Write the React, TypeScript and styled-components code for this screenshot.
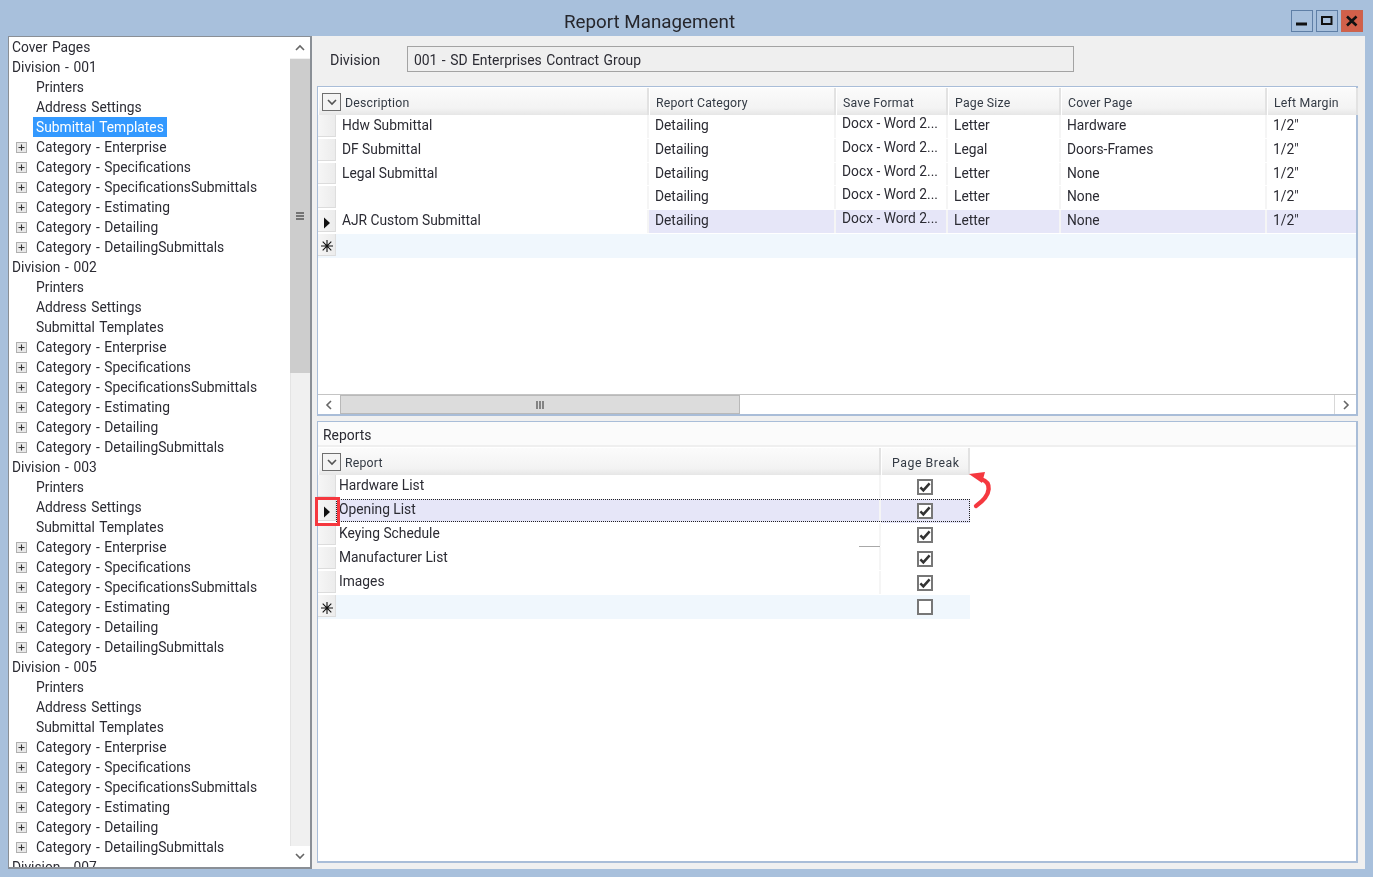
import React from "react";
import styled, { createGlobalStyle } from "styled-components";

const Global = createGlobalStyle`
  html, body { margin: 0; padding: 0; height: 100%; overflow: hidden; }
  body { background: #a8c0dc; font-family: Roboto, "Liberation Sans", sans-serif; color: #2b2b33; }
  * { box-sizing: border-box; }
`;

const Windowed = styled.div`
  position: relative;
  width: 1373px;
  height: 877px;
  overflow: hidden;
  background: #a8c0dc;
  display: flex;
  flex-direction: column;
  filter: blur(0.3px);
`;
const TitleBar = styled.div`
  height: 36px;
  flex: none;
  display: flex;
  align-items: flex-start;
  padding: 10px 10px 0 0;
`;
const Title = styled.div`
  flex: 1;
  text-align: center;
  padding-left: 8px;
  margin-top: 2px;
  font-size: 18.8px;
  line-height: 20px;
  color: #26262c;
`;
const Controls = styled.div`
  display: flex;
  gap: 3px;
`;
const WinBtn = styled.div<{ $close?: boolean }>`
  width: 22px;
  height: 22px;
  border: 1px solid ${(p) => (p.$close ? "#c9644e" : "#5f7fa6")};
  background: ${(p) => (p.$close ? "#d2604a" : "#a8c0dc")};
  display: flex;
  align-items: center;
  justify-content: center;
`;
const Body = styled.div`
  flex: 1;
  display: flex;
  padding: 0 8px 8px 8px;
  min-height: 0;
`;
const TreePane = styled.div`
  width: 304px;
  flex: none;
  height: 833px;
  border: 1px solid #8a8f96;
  border-right-width: 2px;
  border-bottom-width: 2px;
  background: #fff;
  display: flex;
`;
const TreeList = styled.div`
  flex: 1;
  overflow: hidden;
  min-width: 0;
`;
const TreeRow = styled.div<{ $level: number }>`
  height: 20px;
  display: flex;
  align-items: center;
  padding-left: ${(p) => (p.$level === 0 ? 3 : 8)}px;
  font-size: 13.8px;
  word-spacing: 1.2px;
  white-space: nowrap;
`;
const Expander = styled.span<{ $hidden?: boolean }>`
  width: 11px;
  height: 11px;
  flex: none;
  margin-right: 9px;
  margin-left: -1px;
  visibility: ${(p) => (p.$hidden ? "hidden" : "visible")};
  display: flex;
`;
const TreeLabel = styled.span<{ $selected?: boolean }>`
  padding: 0 3px;
  height: 20px;
  line-height: 20px;
  margin-left: -3px;
  background: ${(p) => (p.$selected ? "#3399ff" : "transparent")};
  color: ${(p) => (p.$selected ? "#fff" : "inherit")};
`;
const VScroll = styled.div`
  width: 20px;
  flex: none;
  margin-top: 1px;
  margin-bottom: 1px;
  background: #f0f0f0;
  display: flex;
  flex-direction: column;
`;
const ScrollBtn = styled.div`
  height: 20px;
  flex: none;
  background: #fff;
  display: flex;
  align-items: center;
  justify-content: center;
`;
const VThumb = styled.div`
  height: 314px;
  flex: none;
  margin-top: 1px;
  background: #cdcdcd;
  display: flex;
  align-items: center;
  justify-content: center;
`;
const VTrack = styled.div`
  flex: 1;
  border-left: 1px solid #e4e4e4;
`;
const MainPane = styled.div`
  flex: 1;
  min-width: 0;
  background: #f0f0f0;
  padding: 10px 7px 6px 5px;
  display: flex;
  flex-direction: column;
`;
const DivisionRow = styled.div`
  height: 26px;
  flex: none;
  display: flex;
  align-items: center;
  margin-bottom: 14px;
  padding-left: 13px;
`;
const FieldLabel = styled.div`
  width: 77px;
  flex: none;
  font-size: 14.3px;
  margin-top: 2px;
`;
const FieldValue = styled.div`
  width: 667px;
  height: 26px;
  border: 1px solid #a3a3a3;
  background: #efefef;
  padding: 0 6px;
  font-size: 13.9px;
  word-spacing: 1px;
  line-height: 26px;
`;
const GridFrame = styled.div`
  height: 330px;
  flex: none;
  border: 2px solid #a9bdd8;
  border-width: 1px 2px 2px 1px;
  background: #fff;
  display: flex;
  flex-direction: column;
  margin-bottom: 5px;
`;
const GridBody = styled.div`
  flex: 1;
  min-height: 0;
  overflow: hidden;
`;
const HeaderRow = styled.div`
  display: flex;
  height: 27px;
  margin-top: 1px;
  background: #fff;
`;
const HeaderCell = styled.div<{ $w: number; $first?: boolean; $wide?: boolean }>`
  width: ${(p) => p.$w}px;
  flex: none;
  display: flex;
  align-items: center;
  padding-left: ${(p) => (p.$first ? 3 : p.$wide ? 10 : 6)}px;
  font-size: 12.3px;
  letter-spacing: ${(p) => (p.$wide ? 0.55 : 0.2)}px;
  color: #333a44;
  background: linear-gradient(#fbfbfb, #f3f3f3 75%, #e6e6e6);
  border-right: 2px solid #e2e2e2;
  border-left: 1px solid #fff;
`;
const HeaderText = styled.span`
  position: relative;
  top: 1px;
`;
const ChevronBox = styled.span`
  width: 19px;
  height: 18px;
  flex: none;
  border: 1.5px solid #6f6f6f;
  background: #f4f4f4;
  margin-right: 4px;
  display: flex;
  align-items: center;
  justify-content: center;
`;
const Row = styled.div<{ $isNew?: boolean; $h?: number }>`
  display: flex;
  height: ${(p) => p.$h ?? 24}px;
  position: relative;
  background: ${(p) => (p.$isNew ? "#f0f7fd" : "#fff")};
`;
const RowHead = styled.div`
  width: 18px;
  flex: none;
  margin-bottom: 2px;
  padding-top: 4px;
  background: linear-gradient(90deg, #f6f6f6, #ececec);
  border-bottom: 1px solid #dcdcdc;
  border-right: 1px solid #dedede;
  display: flex;
  align-items: center;
  justify-content: center;
`;
const Cell = styled.div<{ $w: number; $sel?: boolean; $raise?: boolean; $blank?: boolean; $pad?: number }>`
  width: ${(p) => p.$w}px;
  flex: none;
  padding-left: ${(p) => p.$pad ?? 6}px;
  font-size: 13.8px;
  line-height: ${(p) => (p.$raise ? 17 : 20)}px;
  white-space: nowrap;
  overflow: hidden;
  margin-bottom: 1px;
  border-right: 2px solid ${(p) => (p.$blank ? "transparent" : "#f5f5f5")};
  background: ${(p) => (p.$sel ? "#e6e6f8" : p.$blank ? "transparent" : "#fff")};
`;
const CheckCell = styled.div<{ $w: number; $sel?: boolean }>`
  width: ${(p) => p.$w}px;
  flex: none;
  display: flex;
  align-items: center;
  justify-content: center;
  padding-right: 1px;
  background: ${(p) => (p.$sel ? "#e6e6f8" : "transparent")};
`;
const FocusOutline = styled.div`
  position: absolute;
  left: 18px;
  right: 0;
  top: 0;
  bottom: 1px;
  border: 1px dotted #222;
  pointer-events: none;
`;
const Spacer = styled.div`
  flex: 1;
`;
const HScroll = styled.div`
  height: 20px;
  flex: none;
  display: flex;
  background: #fff;
  border-top: 1px solid #c4c4c4;
`;
const HBtn = styled.div<{ $end?: boolean }>`
  width: 22px;
  flex: none;
  background: #fff;
  display: flex;
  align-items: center;
  justify-content: center;
  ${(p) => (p.$end ? "border-left: 1px solid #d8d8d8;" : "")}
`;
const HThumb = styled.div`
  width: 400px;
  flex: none;
  background: #dcdcdc;
  border: 1px solid #b9b9b9;
  display: flex;
  align-items: center;
  justify-content: center;
`;
const ReportsFrame = styled.div`
  flex: 1;
  min-height: 0;
  border: 2px solid #a9bdd8;
  border-width: 1px 2px 2px 1px;
  background: #fff;
  display: flex;
  flex-direction: column;
`;
const ReportsCaption = styled.div`
  height: 25px;
  flex: none;
  background: #fbfbfb;
  border-bottom: 2px solid #efefef;
  padding-left: 5px;
  font-size: 13.9px;
  line-height: 26px;
`;
const ReportsTable = styled.div`
  width: 652px;
`;
const CheckBox = styled.span`
  width: 16px;
  height: 16px;
  border: 2px solid #777;
  background: #fff;
  display: flex;
  align-items: center;
  justify-content: center;
`;
const RedBox = styled.div`
  position: absolute;
  left: 315px;
  top: 497px;
  width: 25px;
  height: 29px;
  border: 3px solid #f5383f;
  pointer-events: none;
`;
const ArrowOverlay = styled.svg`
  position: absolute;
  left: 965px;
  top: 468px;
  width: 30px;
  height: 44px;
  pointer-events: none;
`;
const Smudge = styled.div`
  position: absolute;
  left: 859px;
  top: 546px;
  width: 21px;
  height: 1px;
  background: #a8a8a8;
`;

const Plus = () => (
  <svg width="11" height="11" viewBox="0 0 11 11">
    <rect x="0.5" y="0.5" width="10" height="10" fill="#e9e9e9" stroke="#b0b0b0" />
    <path d="M5.5 2.5v6M2.5 5.5h6" stroke="#333" strokeWidth="1.1" />
  </svg>
);
const Triangle = () => (
  <svg width="8" height="14" viewBox="0 0 8 14">
    <path d="M1 1.5 7 7 1 12.5Z" fill="#111" />
  </svg>
);
const Star = () => (
  <svg width="14" height="14" viewBox="0 0 14 14" style={{ flex: "none" }}>
    <path d="M7 1v12M1 7h12M2.7 2.7l8.6 8.6M11.3 2.7l-8.6 8.6" stroke="#111" strokeWidth="1.1" />
  </svg>
);
const Chevron = ({ d, c = "#666" }: { d: string; c?: string }) => (
  <svg width="12" height="12" viewBox="0 0 12 12">
    <path d={d} fill="none" stroke={c} strokeWidth="1.6" />
  </svg>
);
const Check = () => (
  <svg width="13" height="12" viewBox="0 0 13 12">
    <path d="M1.5 6.5 4.7 9.7 11.5 2" fill="none" stroke="#333" strokeWidth="2.7" />
  </svg>
);

type TreeItem = { label: string; level: number; plus?: boolean; selected?: boolean };
const categories = ["Enterprise", "Specifications", "SpecificationsSubmittals", "Estimating", "Detailing", "DetailingSubmittals"];
const treeItems: TreeItem[] = [{ label: "Cover Pages", level: 0 }];
["001", "002", "003", "005", "007"].forEach((d) => {
  treeItems.push({ label: `Division - ${d}`, level: 0 });
  treeItems.push({ label: "Printers", level: 1 });
  treeItems.push({ label: "Address Settings", level: 1 });
  treeItems.push({ label: "Submittal Templates", level: 1, selected: d === "001" });
  categories.forEach((c) => treeItems.push({ label: `Category - ${c}`, level: 1, plus: true }));
});

const columns = [
  { title: "Description", w: 331 },
  { title: "Report Category", w: 187 },
  { title: "Save Format", w: 112 },
  { title: "Page Size", w: 113 },
  { title: "Cover Page", w: 206 },
  { title: "Left Margin", w: 91 },
];
const templates = [
  ["Hdw Submittal", "Letter", "Hardware"],
  ["DF Submittal", "Legal", "Doors-Frames"],
  ["Legal Submittal", "Letter", "None"],
  ["", "Letter", "None"],
  ["AJR Custom Submittal", "Letter", "None"],
];
const reports = ["Hardware List", "Opening List", "Keying Schedule", "Manufacturer List", "Images"];

export default function App() {
  return (
    <Windowed>
      <Global />
      <TitleBar>
        <Title>Report Management</Title>
        <Controls>
          <WinBtn>
            <svg width="14" height="14" viewBox="0 0 14 14"><rect x="1" y="8.5" width="11" height="3" fill="#111" /></svg>
          </WinBtn>
          <WinBtn>
            <svg width="14" height="14" viewBox="0 0 14 14"><rect x="2" y="3" width="9.5" height="7" fill="none" stroke="#111" strokeWidth="2" /></svg>
          </WinBtn>
          <WinBtn $close>
            <svg width="14" height="14" viewBox="0 0 14 14"><path d="M2 2.5 11.5 11.5M11.5 2.5 2 11.5" stroke="#111" strokeWidth="2.6" /></svg>
          </WinBtn>
        </Controls>
      </TitleBar>
      <Body>
        <TreePane>
          <TreeList>
            {treeItems.map((t, i) => (
              <TreeRow key={i} $level={t.level}>
                {t.level === 1 && <Expander $hidden={!t.plus}><Plus /></Expander>}
                <TreeLabel $selected={t.selected}>{t.label}</TreeLabel>
              </TreeRow>
            ))}
          </TreeList>
          <VScroll>
            <ScrollBtn><Chevron d="M2 8l4-4 4 4" /></ScrollBtn>
            <VThumb>
              <svg width="10" height="10" viewBox="0 0 10 10"><path d="M1 2h8M1 5h8M1 8h8" stroke="#555" strokeWidth="1.3" /></svg>
            </VThumb>
            <VTrack />
            <ScrollBtn><Chevron d="M2 4l4 4 4-4" /></ScrollBtn>
          </VScroll>
        </TreePane>
        <MainPane>
          <DivisionRow>
            <FieldLabel>Division</FieldLabel>
            <FieldValue>001 - SD Enterprises Contract Group</FieldValue>
          </DivisionRow>
          <GridFrame>
            <HeaderRow>
              {columns.map((c, i) => (
                <HeaderCell key={c.title} $w={c.w} $first={i === 0}>
                  {i === 0 && <ChevronBox><Chevron d="M2 4l4 4 4-4" c="#555" /></ChevronBox>}
                  <HeaderText>{c.title}</HeaderText>
                </HeaderCell>
              ))}
            </HeaderRow>
            <GridBody>
              {templates.map((t, i) => {
                const sel = i === 4;
                return (
                  <Row key={i} $h={23.8}>
                    <RowHead>{sel && <Triangle />}</RowHead>
                    <Cell $w={313} $pad={6}>{t[0]}</Cell>
                    <Cell $w={187} $sel={sel}>Detailing</Cell>
                    <Cell $w={112} $sel={sel} $raise>Docx - Word 2...</Cell>
                    <Cell $w={113} $sel={sel}>{t[1]}</Cell>
                    <Cell $w={206} $sel={sel}>{t[2]}</Cell>
                    <Cell $w={91} $sel={sel}>1/2"</Cell>
                  </Row>
                );
              })}
              <Row $isNew>
                <RowHead><Star /></RowHead>
              </Row>
            </GridBody>
            <HScroll>
              <HBtn><Chevron d="M8 2 4 6l4 4" /></HBtn>
              <HThumb>
                <svg width="10" height="10" viewBox="0 0 10 10"><path d="M2 1v8M5 1v8M8 1v8" stroke="#555" strokeWidth="1.3" /></svg>
              </HThumb>
              <Spacer />
              <HBtn $end><Chevron d="M4 2l4 4-4 4" /></HBtn>
            </HScroll>
          </GridFrame>
          <ReportsFrame>
            <ReportsCaption>Reports</ReportsCaption>
            <ReportsTable>
              <HeaderRow>
                <HeaderCell $w={563} $first>
                  <ChevronBox><Chevron d="M2 4l4 4 4-4" c="#555" /></ChevronBox>
                  <HeaderText>Report</HeaderText>
                </HeaderCell>
                <HeaderCell $w={89} $wide><HeaderText>Page Break</HeaderText></HeaderCell>
              </HeaderRow>
              {reports.map((r, i) => {
                const sel = i === 1;
                return (
                  <Row key={r}>
                    <RowHead>{sel && <Triangle />}</RowHead>
                    <Cell $w={545} $sel={sel} $pad={3}>{r}</Cell>
                    <CheckCell $w={89} $sel={sel}><CheckBox><Check /></CheckBox></CheckCell>
                    {sel && <FocusOutline />}
                  </Row>
                );
              })}
              <Row $isNew>
                <RowHead><Star /></RowHead>
                <Cell $w={545} $blank />
                <CheckCell $w={89}><CheckBox /></CheckCell>
              </Row>
            </ReportsTable>
          </ReportsFrame>
        </MainPane>
      </Body>
      <RedBox />
      <Smudge />
      <ArrowOverlay viewBox="0 0 30 44">
        <path d="M16 11 C 26 14, 28 26, 11 38" fill="none" stroke="#f5383f" strokeWidth="4.4" strokeLinecap="round" />
        <path d="M4 6 L20 4 L17 15 Z" fill="#f5383f" />
      </ArrowOverlay>
    </Windowed>
  );
}
